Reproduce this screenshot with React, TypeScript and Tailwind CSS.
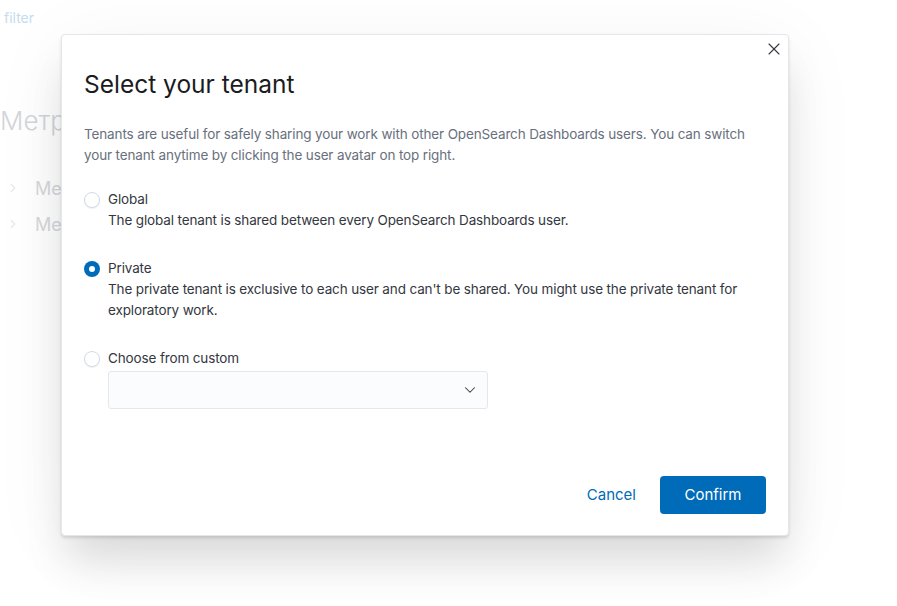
import { ChevronDown, ChevronRight, X } from 'lucide-react';

const options = [
  {
    id: 'global',
    label: 'Global',
    description: 'The global tenant is shared between every OpenSearch Dashboards user.',
  },
  {
    id: 'private',
    label: 'Private',
    description:
      "The private tenant is exclusive to each user and can't be shared. You might use the private tenant for exploratory work.",
  },
];

function Radio({ checked }: { checked: boolean }) {
  if (checked) {
    return (
      <span className="flex h-4 w-4 shrink-0 items-center justify-center rounded-full bg-[#006bb8]">
        <span className="h-[6px] w-[6px] rounded-full bg-white" />
      </span>
    );
  }
  return <span className="h-4 w-4 shrink-0 rounded-full border border-[#d3dae6] bg-white shadow-[0_1px_1px_rgba(0,0,0,0.06)]" />;
}

export default function App() {
  const selected = 'private';

  return (
    <div className="relative h-[606px] w-[897px] overflow-hidden bg-white font-['Inter',sans-serif]">
      {/* page behind the overlay */}
      <div className="px-1 pt-[7px] text-[14px] text-[#c4dcef]">filter</div>
      <div className="mt-[80px] text-[26px] font-light leading-none text-[#d3d5d9]">Метрики</div>
      <div className="mt-[43px] flex flex-col gap-[14px] pl-[6px]">
        <div className="flex h-[22px] items-center gap-[15px] text-[18px] text-[#d6d8dc]">
          <ChevronRight size={14} className="text-[#e6e8eb]" />
          <span>Метрика</span>
        </div>
        <div className="flex h-[22px] items-center gap-[15px] text-[18px] text-[#d6d8dc]">
          <ChevronRight size={14} className="text-[#e6e8eb]" />
          <span>Метрика</span>
        </div>
      </div>

      {/* modal */}
      <div className="absolute left-[61px] top-[34px] flex h-[502px] w-[728px] flex-col rounded-[4px] border border-[#e3e6ea] bg-white shadow-[0_2px_3px_rgba(0,0,0,0.12),0_30px_40px_-5px_rgba(0,0,0,0.12),0_10px_80px_rgba(0,0,0,0.05)]">
        <button className="absolute right-[4px] top-[4px] flex h-5 w-5 items-center justify-center text-[#343741]">
          <X size={20} strokeWidth={1.3} />
        </button>

        <div className="px-[22px] pt-[31px]">
          <h1 className="text-[24.5px] leading-[36px] font-normal text-[#1a1c21]">Select your tenant</h1>
        </div>

        <div className="px-[22px] pt-[22px] text-[13.5px] tracking-[-0.01em]">
          <p className="leading-[21px] text-[#69707d]">
            Tenants are useful for safely sharing your work with other OpenSearch Dashboards users. You can switch
            your tenant anytime by clicking the user avatar on top right.
          </p>

          <div className="mt-[23px] flex flex-col gap-[27px]">
            {options.map((o) => (
              <div key={o.id}>
                <label className="flex items-center gap-2">
                  <Radio checked={o.id === selected} />
                  <span className="leading-[21px] text-[#343741]">{o.label}</span>
                </label>
                <p className="pl-[24px] leading-[21px] text-[#343741]">{o.description}</p>
              </div>
            ))}
            <div>
              <label className="flex items-center gap-2">
                <Radio checked={false} />
                <span className="leading-[21px] text-[#343741]">Choose from custom</span>
              </label>
              <div className="ml-[24px] mt-[2px] flex h-[38px] w-[380px] items-center justify-end rounded-[3px] border border-[#e4e7ec] bg-[#fbfcfd] pr-[8px]">
                <ChevronDown size={18} strokeWidth={1.4} className="text-[#343741]" />
              </div>
            </div>
          </div>
        </div>

        <div className="mt-auto flex items-center justify-end gap-6 px-[22px] pb-[21px]">
          <button className="text-[15px] text-[#006bb8]">Cancel</button>
          <button className="h-[38px] w-[106px] rounded-[4px] bg-[#006bb8] text-[15px] text-white">Confirm</button>
        </div>
      </div>
    </div>
  );
}
